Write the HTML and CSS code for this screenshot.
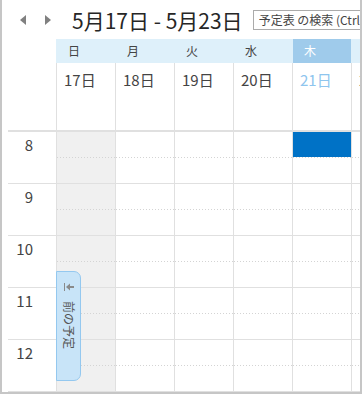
FILE: index.html
```html
<!DOCTYPE html>
<html lang="ja">
<head>
    <meta charset="UTF-8">
    <title>予定表 - 週</title>
    <link rel="stylesheet" href="styles.css">
</head>
<body>
    <div class="cal">
        <div class="toolbar">
            <span class="nav prev"></span>
            <span class="nav next"></span>
            <h1 class="range">5月17日 - 5月23日</h1>
            <div class="search">予定表 の検索 (Ctrl+E)</div>
        </div>

        <!-- 曜日と日付 -->
        <div class="week">
            <div class="corner"></div>
            <div class="dayname">日</div>
            <div class="dayname">月</div>
            <div class="dayname">火</div>
            <div class="dayname">水</div>
            <div class="dayname today">木</div>
            <div class="dayname">金</div>

            <div class="corner line"></div>
            <div class="date">17日</div>
            <div class="date">18日</div>
            <div class="date">19日</div>
            <div class="date">20日</div>
            <div class="date today">21日</div>
            <div class="date">22日</div>
        </div>

        <!-- 時間グリッド -->
        <div class="grid">
            <div class="times">
                <div class="hour">8</div>
                <div class="hour">9</div>
                <div class="hour">10</div>
                <div class="hour">11</div>
                <div class="hour">12</div>
            </div>
            <div class="col off">
                <div class="slot"></div><div class="slot"></div><div class="slot"></div><div class="slot"></div><div class="slot"></div>
            </div>
            <div class="col">
                <div class="slot"></div><div class="slot"></div><div class="slot"></div><div class="slot"></div><div class="slot"></div>
            </div>
            <div class="col">
                <div class="slot"></div><div class="slot"></div><div class="slot"></div><div class="slot"></div><div class="slot"></div>
            </div>
            <div class="col">
                <div class="slot"></div><div class="slot"></div><div class="slot"></div><div class="slot"></div><div class="slot"></div>
            </div>
            <div class="col">
                <div class="slot"><div class="event"></div></div><div class="slot"></div><div class="slot"></div><div class="slot"></div><div class="slot"></div>
            </div>
            <div class="col">
                <div class="slot"></div><div class="slot"></div><div class="slot"></div><div class="slot"></div><div class="slot"></div>
            </div>
        </div>

        <div class="prev-tab">
            <svg width="10" height="8" viewBox="0 0 10 8">
                <rect x="0" y="0" width="1" height="8" fill="#8a8a8a"/>
                <polygon points="2,4 6,0.5 6,7.5" fill="#8a8a8a"/>
                <rect x="5" y="3" width="5" height="2" fill="#8a8a8a"/>
            </svg>
            <span class="label">前の予定</span>
        </div>
    </div>
</body>
</html>
```

FILE: styles.css
```css
body {
    margin: 0;
    font-family: "Noto Sans CJK JP", "Noto Sans", sans-serif;
    color: #444;
}
.cal {
    position: relative;
    width: 362px;
    height: 394px;
    box-sizing: border-box;
    border: 2px solid #c6c6c6;
    border-top: none;
    background: #fff;
    overflow: hidden;
}
.toolbar {
    height: 39px;
    display: flex;
    align-items: center;
    white-space: nowrap;
}
.nav {
    width: 0;
    height: 0;
    border-top: 5px solid transparent;
    border-bottom: 5px solid transparent;
}
.prev {
    margin-left: 18px;
    border-right: 6px solid #808080;
}
.next {
    margin-left: 19px;
    border-left: 6px solid #808080;
}
.range {
    margin: 0 0 0 21px;
    font-size: 21px;
    font-weight: 400;
    line-height: 28px;
    color: #262626;
}
.search {
    margin-left: 10px;
    height: 18px;
    border: 1px solid #ababab;
    padding: 0 5px;
    font-size: 12px;
    line-height: 18px;
    color: #444;
}
.week, .grid {
    display: grid;
    grid-template-columns: 54px repeat(5, 59px) 9px;
}
.week {
    grid-template-rows: 24px 69px;
}
.dayname {
    background: #def0fa;
    border-left: 1px solid #def0fa;
    padding-left: 11px;
    font-size: 12px;
    line-height: 24px;
    white-space: nowrap;
}
.dayname.today {
    background: #9fcbeb;
    color: #fff;
}
.corner.line {
    margin-left: 6px;
    border-bottom: 2px solid #e0e0e0;
}
.date {
    border-left: 1px solid #e0e0e0;
    border-bottom: 2px solid #e0e0e0;
    padding: 7px 0 0 7px;
    font-size: 15px;
    line-height: 20px;
    white-space: nowrap;
    overflow: hidden;
}
.date.today {
    color: #8ec5ee;
}
.times .hour {
    margin-left: 6px;
    height: 51px;
    border-bottom: 1px solid #e0e0e0;
    padding-top: 3px;
    box-sizing: content-box;
    height: 48px;
    padding-right: 23px;
    text-align: right;
    font-size: 15px;
    line-height: 20px;
}
.col {
    border-left: 1px solid #e0e0e0;
}
.col.off {
    background: #f0f0f0;
}
.slot {
    height: 51px;
    border-bottom: 1px solid #e0e0e0;
    background: repeating-linear-gradient(to right, #d4d4d4 0 1px, transparent 1px 3px) 0 25px / 100% 1px no-repeat;
}
.event {
    height: 25px;
    background: #0072c6;
}
.prev-tab {
    position: absolute;
    left: 54px;
    top: 271px;
    width: 23px;
    height: 108px;
    border: 1px solid #94c8ef;
    border-radius: 0 7px 7px 0;
    background: #c8e4f8;
    display: flex;
    flex-direction: column;
    align-items: center;
    padding-top: 11px;
    box-sizing: content-box;
    height: 97px;
}
.prev-tab .label {
    margin-top: 10px;
    writing-mode: vertical-rl;
    text-orientation: sideways;
    font-size: 12px;
    line-height: 14px;
    color: #555;
}
```
